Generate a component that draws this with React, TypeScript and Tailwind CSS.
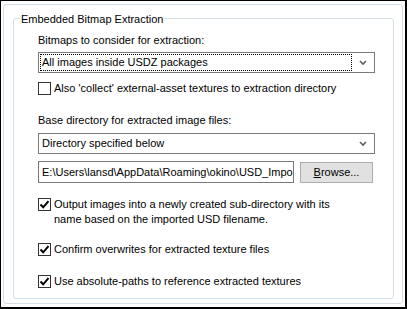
import React from "react";

const font = { fontFamily: '"Liberation Sans", Arial, sans-serif' };

function Check({ checked }: { checked?: boolean }) {
    return (
        <span className="w-[13px] h-[13px] shrink-0 border border-[#333333] bg-white flex items-center justify-center">
            {checked && (
                <svg width="11" height="11" viewBox="0 0 11 11">
                    <path d="M1.5 5.5 L4.2 8.3 L9.5 2.2" fill="none" stroke="#000" strokeWidth="2" />
                </svg>
            )}
        </span>
    );
}

function Chevron() {
    return (
        <svg width="8" height="6" viewBox="0 0 8 6" className="shrink-0">
            <path d="M1 1 L4 4 L7 1" fill="none" stroke="#606060" strokeWidth="1.6" />
        </svg>
    );
}

function Combo({ value, focused }: { value: string; focused?: boolean }) {
    return (
        <div className="w-[337px] h-[21px] border border-[#7a7a7a] bg-white flex items-center pl-[1px] pr-[4px]">
            <div
                className={
                    "flex-1 h-[17px] flex items-center pl-[1px] " +
                    (focused ? "border border-dotted border-black" : "border border-transparent")
                }
            >
                {value}
            </div>
            <div className="w-[14px] flex justify-center ml-[4px]">
                <Chevron />
            </div>
        </div>
    );
}

function CheckRow({ checked, children }: { checked?: boolean; children: React.ReactNode }) {
    return (
        <div className="flex items-start gap-[3px]">
            <Check checked={checked} />
            <div className="leading-[15px] -mt-[1px]">{children}</div>
        </div>
    );
}

export default function App() {
    return (
        <div
            className="w-[407px] h-[309px] bg-white border-l border-t border-r-2 border-b-2 border-black pl-[2px] pt-[3px] pr-[2px] pb-[3px] flex text-[11px] text-black"
            style={font}
        >
            <div className="flex-1 border border-[#d5dfe5] rounded-[3px] pl-[9px] pt-[13px] pr-[8px] pb-[4px] flex">
                <div className="relative flex-1 border border-[#d5dfe5] rounded-[3px] pl-[24px] pt-[14px]">
                    {/* group title sits over the border */}
                    <span className="absolute left-[6px] -top-[7px] bg-white px-[1px] leading-[14px]">
                        Embedded Bitmap Extraction
                    </span>

                    <div className="leading-[14px]">Bitmaps to consider for extraction:</div>
                    <div className="mt-[5px]">
                        <Combo value="All images inside USDZ packages" focused />
                    </div>

                    <div className="mt-[9px]">
                        <CheckRow>Also 'collect' external-asset textures to extraction directory</CheckRow>
                    </div>

                    <div className="mt-[17px] leading-[14px]">Base directory for extracted image files:</div>
                    <div className="mt-[6px]">
                        <Combo value="Directory specified below" />
                    </div>

                    <div className="mt-[7px] flex items-center">
                        <div className="w-[256px] h-[22px] border border-[#7a7a7a] bg-white flex items-center pl-[3px] overflow-hidden whitespace-nowrap">
                            E:\Users\lansd\AppData\Roaming\okino\USD_Impor
                        </div>
                        <button className="ml-[6px] w-[73px] h-[21px] border border-[#adadad] bg-[#e1e1e1] flex items-center justify-center">
                            <span>
                                <span className="underline">B</span>rowse...
                            </span>
                        </button>
                    </div>

                    <div className="mt-[15px]">
                        <CheckRow checked>
                            Output images into a newly created sub-directory with its
                            <br />
                            name based on the imported USD filename.
                        </CheckRow>
                    </div>

                    <div className="mt-[16px]">
                        <CheckRow checked>Confirm overwrites for extracted texture files</CheckRow>
                    </div>

                    <div className="mt-[18px]">
                        <CheckRow checked>Use absolute-paths to reference extracted textures</CheckRow>
                    </div>
                </div>
            </div>
        </div>
    );
}
